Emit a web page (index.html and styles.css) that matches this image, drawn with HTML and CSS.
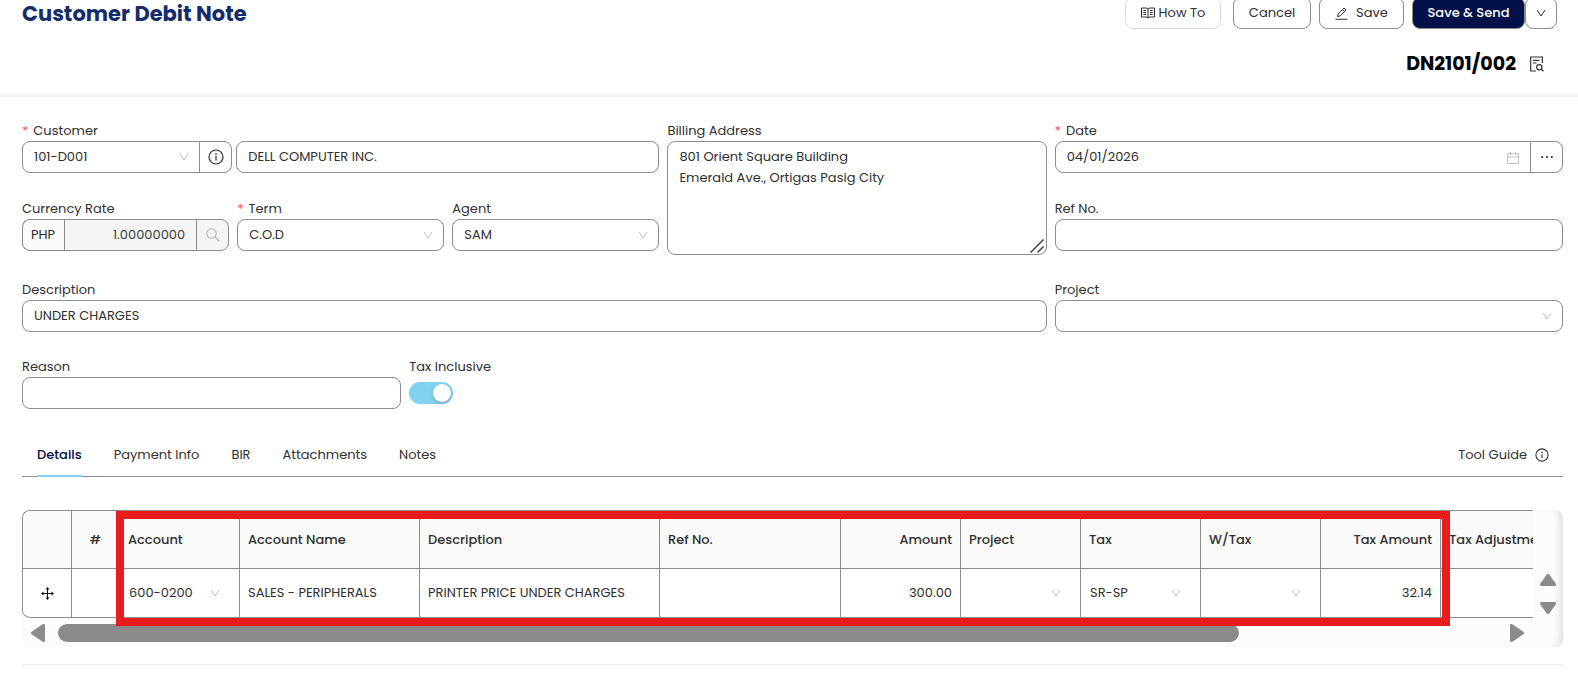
FILE: index.html
```html
<!DOCTYPE html>
<html lang="en">
<head>
    <meta charset="UTF-8">
    <meta name="viewport" content="width=device-width, initial-scale=1.0">
    <title>Customer Debit Note</title>
    <link rel="stylesheet" href="styles.css">
</head>
<body>
    <!-- shared icons -->
    <svg class="sprite" aria-hidden="true">
        <symbol id="chevron" viewBox="0 0 10 10"><path d="M1 2l4 6 4-6" fill="none" stroke="currentColor"/></symbol>
        <symbol id="info" viewBox="0 0 16 16">
            <circle cx="8" cy="8" r="7" fill="none" stroke="currentColor" stroke-width="1.2"/>
            <path d="M7.4 7h1.2v4.5H7.4zM7.2 4.2h1.6v1.6H7.2z" fill="currentColor"/>
        </symbol>
    </svg>

    <header class="header">
        <div class="header-top">
            <h1>Customer Debit Note</h1>
            <div class="actions">
                <button type="button" class="btn btn-light">
                    <svg width="14" height="12" viewBox="0 0 14 12" fill="none" stroke="currentColor"><path d="M.5 1h4.3Q7 1 7 2.2 7 1 9.2 1h4.3v9H9.2Q7 10 7 11.2 7 10 4.800 10H.5zM7 2v9M2.300 3.500h2.800M2.300 5.500h2.800M2.300 7.500h2.800M8.900 3.500h2.800M8.900 5.500h2.800M8.900 7.500h2.800"/></svg>
                    How To
                </button>
                <button type="button" class="btn btn-cancel">Cancel</button>
                <button type="button" class="btn btn-save">
                    <svg width="13" height="13" viewBox="0 0 13 13" fill="none" stroke="currentColor"><path d="M.5 12.300h12M2.500 9.500l.6-2.600L9 1l2 2-5.900 5.900zM7.500 2.500l2 2"/></svg>
                    Save
                </button>
                <div class="split">
                    <button type="button" class="btn btn-primary">Save &amp; Send</button>
                    <button type="button" class="btn btn-more" aria-label="More save options"><svg width="10" height="10"><use href="#chevron"/></svg></button>
                </div>
            </div>
        </div>
        <div class="doc-no">
            <strong>DN2101/002</strong>
            <button type="button" class="icon-btn" aria-label="Audit">
                <svg width="14" height="16" viewBox="0 0 14 16" fill="none" stroke="currentColor" stroke-width="1.2"><path d="M6 15H.7V1h11.600v6M3 4.300h6.500M3 7h3.500"/><circle cx="9.300" cy="11.300" r="2.700"/><path d="M11.200 13.200l2.300 2"/></svg>
            </button>
        </div>
    </header>

    <main class="content">
        <form class="form">
            <div class="span-5 stack">
                <div class="customer-row">
                    <div class="field">
                        <label for="customer" class="required">Customer</label>
                        <div class="group">
                            <div class="select">
                                <select id="customer"><option>101-D001</option></select>
                                <svg><use href="#chevron"/></svg>
                            </div>
                            <button type="button" class="addon" aria-label="Customer info"><svg width="16" height="16"><use href="#info"/></svg></button>
                        </div>
                    </div>
                    <input type="text" class="input" aria-label="Customer name" value="DELL COMPUTER INC.">
                </div>
                <div class="thirds">
                    <div class="field">
                        <label for="rate">Currency Rate</label>
                        <div class="group rate">
                            <span class="prefix">PHP</span>
                            <input type="text" id="rate" class="input" value="1.00000000" disabled>
                            <button type="button" class="addon" aria-label="Search rate" disabled>
                                <svg width="14" height="14" viewBox="0 0 14 14" fill="none" stroke="currentColor" stroke-width="1.100"><circle cx="5.500" cy="5.500" r="4.700"/><path d="M9 9l4.500 4.500"/></svg>
                            </button>
                        </div>
                    </div>
                    <div class="field">
                        <label for="term" class="required">Term</label>
                        <div class="select">
                            <select id="term"><option>C.O.D</option></select>
                            <svg><use href="#chevron"/></svg>
                        </div>
                    </div>
                    <div class="field">
                        <label for="agent">Agent</label>
                        <div class="select">
                            <select id="agent"><option>SAM</option></select>
                            <svg><use href="#chevron"/></svg>
                        </div>
                    </div>
                </div>
            </div>

            <div class="span-3 field address">
                <label for="address">Billing Address</label>
                <textarea id="address">801 Orient Square Building
Emerald Ave., Ortigas Pasig City</textarea>
                <svg class="resize" width="14" height="14" viewBox="0 0 14 14" fill="none" stroke="#444" stroke-width="1.500"><path d="M.5 13.500l13-13M7.500 13.500l6-6"/></svg>
            </div>

            <div class="span-4 stack">
                <div class="field">
                    <label for="date" class="required">Date</label>
                    <div class="group">
                        <div class="date">
                            <input type="text" id="date" class="input" value="04/01/2026">
                            <svg width="12" height="12" viewBox="0 0 12 12" fill="none" stroke="currentColor"><path d="M.5 1.800h11v9.700H.5zM.5 5h11M3.500 0v3M8.500 0v3"/></svg>
                        </div>
                        <button type="button" class="addon" aria-label="More dates">
                            <svg width="12" height="4" viewBox="0 0 12 4" fill="currentColor"><circle cx="1.200" cy="2" r="1.100"/><circle cx="6" cy="2" r="1.100"/><circle cx="10.800" cy="2" r="1.100"/></svg>
                        </button>
                    </div>
                </div>
                <div class="field">
                    <label for="ref">Ref No.</label>
                    <input type="text" id="ref" class="input">
                </div>
            </div>

            <div class="span-8 field">
                <label for="description">Description</label>
                <input type="text" id="description" class="input" value="UNDER CHARGES">
            </div>
            <div class="span-4 field">
                <label for="project">Project</label>
                <div class="select">
                    <select id="project"><option></option></select>
                    <svg><use href="#chevron"/></svg>
                </div>
            </div>

            <div class="span-3 field">
                <label for="reason">Reason</label>
                <input type="text" id="reason" class="input">
            </div>
            <div class="span-3 field">
                <label for="taxInclusive">Tax Inclusive</label>
                <input type="checkbox" id="taxInclusive" class="switch" role="switch" checked>
            </div>
        </form>

        <nav class="tabs">
            <button type="button" class="tab active">Details</button>
            <button type="button" class="tab">Payment Info</button>
            <button type="button" class="tab">BIR</button>
            <button type="button" class="tab">Attachments</button>
            <button type="button" class="tab">Notes</button>
            <button type="button" class="tool-guide">Tool Guide <svg width="14" height="14"><use href="#info"/></svg></button>
        </nav>

        <section class="sheet">
            <div class="table-view">
                <table>
                    <colgroup>
                        <col class="w-drag"><col class="w-no"><col class="w-s"><col class="w-m"><col class="w-l"><col class="w-ref">
                        <col class="w-s"><col class="w-s"><col class="w-s"><col class="w-s"><col class="w-s"><col class="w-m">
                    </colgroup>
                    <thead>
                        <tr>
                            <th></th>
                            <th class="center">#</th>
                            <th>Account</th>
                            <th>Account Name</th>
                            <th>Description</th>
                            <th>Ref No.</th>
                            <th class="right">Amount</th>
                            <th>Project</th>
                            <th>Tax</th>
                            <th>W/Tax</th>
                            <th class="right">Tax Amount</th>
                            <th>Tax Adjustment</th>
                        </tr>
                    </thead>
                    <tbody>
                        <tr>
                            <td class="center">
                                <svg width="13" height="13" viewBox="0 0 13 13" fill="none" stroke="#111"><path d="M6.500 1v11M1 6.500h11"/><path fill="#111" stroke="none" d="M6.500 0l2 2.500h-4zM6.500 13l2-2.500h-4zM0 6.500l2.500-2v4zM13 6.500l-2.500-2v4z"/></svg>
                            </td>
                            <td></td>
                            <td><div class="select plain"><select aria-label="Account"><option>600-0200</option></select><svg><use href="#chevron"/></svg></div></td>
                            <td>SALES - PERIPHERALS</td>
                            <td>PRINTER PRICE UNDER CHARGES</td>
                            <td></td>
                            <td class="right">300.00</td>
                            <td><div class="select plain"><select aria-label="Project"><option></option></select><svg><use href="#chevron"/></svg></div></td>
                            <td><div class="select plain"><select aria-label="Tax"><option>SR-SP</option></select><svg><use href="#chevron"/></svg></div></td>
                            <td><div class="select plain"><select aria-label="W/Tax"><option></option></select><svg><use href="#chevron"/></svg></div></td>
                            <td class="right">32.14</td>
                            <td></td>
                        </tr>
                    </tbody>
                </table>
            </div>
            <div class="v-scroll">
                <button type="button" aria-label="Scroll up"><svg width="16" height="12" viewBox="0 0 16 12"><path d="M8 1.500L14.500 10.500h-13z"/></svg></button>
                <button type="button" aria-label="Scroll down"><svg width="16" height="12" viewBox="0 0 16 12"><path d="M8 10.500L14.500 1.500h-13z"/></svg></button>
            </div>
            <div class="h-scroll">
                <button type="button" aria-label="Scroll left"><svg width="14" height="18" viewBox="0 0 14 18"><path d="M1.500 9L12.500 1.500v15z"/></svg></button>
                <div class="track"><div class="thumb" style="width: 82.1%"></div></div>
                <button type="button" aria-label="Scroll right"><svg width="14" height="18" viewBox="0 0 14 18"><path d="M12.500 9L1.500 1.500v15z"/></svg></button>
            </div>
            <div class="highlight"></div>
        </section>
        <hr>
    </main>
</body>
</html>
```
FILE: styles.css
```css
* {
    box-sizing: border-box;
    margin: 0;
    padding: 0;
}

body {
    font-family: Poppins, Inter, sans-serif;
    font-size: 13px;
    line-height: 20px;
    color: #303030;
    background-color: #fff;
    overflow: hidden;
}

button, input, select, textarea {
    font: inherit;
    color: inherit;
}

button {
    cursor: pointer;
}

svg {
    display: block;
    flex: none;
}

.sprite {
    display: none;
}

/* header */
.header {
    margin-top: -3px;
    padding: 0 21px 14px 22px;
    border-bottom: 3px solid #f2f2f2;
}

.header-top {
    display: flex;
    justify-content: space-between;
    align-items: center;
    height: 32px;
}

h1 {
    padding-top: 2px;
    font-size: 21px;
    line-height: 32px;
    color: #152c6b;
}

.actions, .split {
    display: flex;
}

.actions {
    gap: 8px;
}

.btn {
    display: flex;
    align-items: center;
    justify-content: center;
    gap: 4px;
    height: 32px;
    padding: 0 15px;
    border: 1px solid #8c8c8c;
    border-radius: 8px;
    background-color: #fff;
}

.btn-light {
    width: 96px;
    margin-right: 4px;
    padding: 0;
    border-color: #d9d9d9;
}

.btn-cancel {
    width: 78px;
}

.btn-save {
    width: 85px;
    gap: 8px;
}

.btn-primary {
    width: 113px;
    padding: 0;
    font-weight: 500;
    color: #fff;
    background-color: #021148;
}

.btn-more {
    width: 32px;
    padding: 0;
}

.doc-no {
    display: flex;
    justify-content: flex-end;
    align-items: center;
    gap: 14px;
    height: 32px;
    margin-top: 19px;
    padding-right: 13px;
    color: #000;
}

.doc-no strong {
    font-size: 19px;
}

.icon-btn {
    border: none;
    background: none;
    color: #333;
}

/* form */
.content {
    padding: 23px 15px 0 22px;
}

.form {
    display: grid;
    grid-template-columns: repeat(12, 1fr);
    gap: 24px 8px;
}

.span-3 { grid-column: span 3; }
.span-4 { grid-column: span 4; }
.span-5 { grid-column: span 5; }
.span-8 { grid-column: span 8; }

.stack {
    display: flex;
    flex-direction: column;
    gap: 25px;
}

.customer-row {
    display: grid;
    grid-template-columns: 33% 1fr;
    align-items: end;
    gap: 4px;
}

.thirds {
    display: grid;
    grid-template-columns: repeat(3, 1fr);
    gap: 8px;
}

.field {
    display: flex;
    flex-direction: column;
    min-width: 0;
}

.field label {
    height: 21px;
    line-height: 21px;
}

.required::before {
    content: "*";
    margin-right: 5px;
    color: #ff4d4f;
}

.input, select, textarea {
    width: 100%;
    min-width: 0;
    height: 32px;
    padding: 0 11px;
    border: 1px solid #8c8c8c;
    border-radius: 8px;
    background-color: #fff;
    outline: none;
}

textarea {
    display: block;
    height: 114px;
    padding: 4px 11px;
    line-height: 21px;
    resize: none;
}

.address, .select, .date {
    position: relative;
}

.resize {
    position: absolute;
    right: 3px;
    bottom: 2px;
}

.select, .date {
    flex: 1;
    min-width: 0;
}

select {
    display: block;
    appearance: none;
}

.select svg {
    position: absolute;
    top: 11px;
    right: 11px;
    width: 10px;
    height: 10px;
    color: #bfbfbf;
    pointer-events: none;
}

.date svg {
    position: absolute;
    top: 11px;
    right: 12px;
    color: #bfbfbf;
}

.group {
    display: flex;
}

.group select, .group .date .input {
    border-radius: 8px 0 0 8px;
}

.addon {
    display: flex;
    align-items: center;
    justify-content: center;
    width: 33px;
    height: 32px;
    margin-left: -1px;
    border: 1px solid #8c8c8c;
    border-radius: 0 8px 8px 0;
    background-color: #fff;
}

.prefix {
    padding: 5px 9px 5px 8px;
    border: 1px solid #8c8c8c;
    border-right: none;
    border-radius: 8px 0 0 8px;
    background-color: #fafafa;
}

.rate .input {
    flex: 1;
    border-radius: 0;
    text-align: right;
    color: #404040;
    background-color: #f4f4f4;
}

.rate .addon {
    color: #b5b5b5;
    background-color: #f4f4f4;
}

.switch {
    appearance: none;
    width: 44px;
    height: 22px;
    margin-top: 5px;
    padding: 2px;
    border-radius: 11px;
    background-color: #bfbfbf;
    cursor: pointer;
}

.switch::before {
    content: "";
    display: block;
    width: 18px;
    height: 18px;
    border-radius: 9px;
    background-color: #fff;
    box-shadow: 0 2px 4px rgba(0, 35, 11, 0.2);
}

.switch:checked {
    background-color: #82d2ef;
}

.switch:checked::before {
    margin-left: auto;
}

/* tabs */
.tabs {
    display: flex;
    gap: 32px;
    margin-top: 23px;
    padding: 0 14px 0 15px;
    border-bottom: 1px solid #8c8c8c;
}

.tab, .tool-guide {
    padding: 13px 0 11px;
    border: none;
    background: none;
}

.tab.active {
    margin-bottom: -1px;
    padding-bottom: 10px;
    border-bottom: 2px solid #82d2ef;
    font-weight: 500;
    color: #021148;
}

.tool-guide {
    display: flex;
    align-items: center;
    gap: 8px;
    margin-left: auto;
}

/* details table */
.sheet {
    position: relative;
    display: grid;
    grid-template-columns: 1fr 30px;
    margin-top: 33px;
    border-radius: 8px;
    background-color: #fcfcfc;
    box-shadow: inset -8px 0 8px -6px rgba(0, 0, 0, 0.15);
}

.table-view {
    overflow: hidden;
    border: 1px solid #8c8c8c;
    border-width: 1px 0 0 1px;
    border-radius: 8px 0 0 8px;
}

table {
    width: 1598px;
    table-layout: fixed;
    border-collapse: separate;
    border-spacing: 0;
}

.w-drag { width: 49px; }
.w-no { width: 48px; }
.w-s { width: 120px; }
.w-m { width: 180px; }
.w-ref { width: 181px; }
.w-l { width: 240px; }

th, td {
    padding: 0 8px;
    border-right: 1px solid #8c8c8c;
    border-bottom: 1px solid #8c8c8c;
    text-align: left;
    white-space: nowrap;
}

th {
    height: 58px;
    font-weight: 500;
    background-color: #fafafa;
}

td {
    height: 49px;
    background-color: #fff;
}

tbody td:first-child {
    border-bottom-left-radius: 8px;
}

.center {
    text-align: center;
}

td.center svg {
    margin: 0 auto;
}

.right {
    text-align: right;
}

.plain select {
    padding: 0 1px;
    border: none;
    background: none;
}

.v-scroll {
    display: flex;
    flex-direction: column;
    align-items: center;
    justify-content: flex-end;
    gap: 16px;
    padding-bottom: 4px;
}

.h-scroll {
    grid-column: 1;
    display: flex;
    align-items: center;
    gap: 13px;
    height: 29px;
    padding: 0 9px;
}

.v-scroll button, .h-scroll button {
    border: none;
    background: none;
    color: #8b8b8b;
}

.sheet button path {
    fill: currentColor;
    stroke: currentColor;
    stroke-width: 3;
    stroke-linejoin: round;
}

.track {
    flex: 1;
}

.thumb {
    height: 18px;
    border-radius: 9px;
    background-color: #8b8b8b;
}

/* frame over the line columns */
.highlight {
    position: absolute;
    top: 1px;
    left: 94px;
    width: 1334px;
    height: 115px;
    border: 8px solid #e81c1c;
    pointer-events: none;
}

hr {
    margin-top: 17px;
    border: none;
    border-top: 1px solid #ececec;
}
```
